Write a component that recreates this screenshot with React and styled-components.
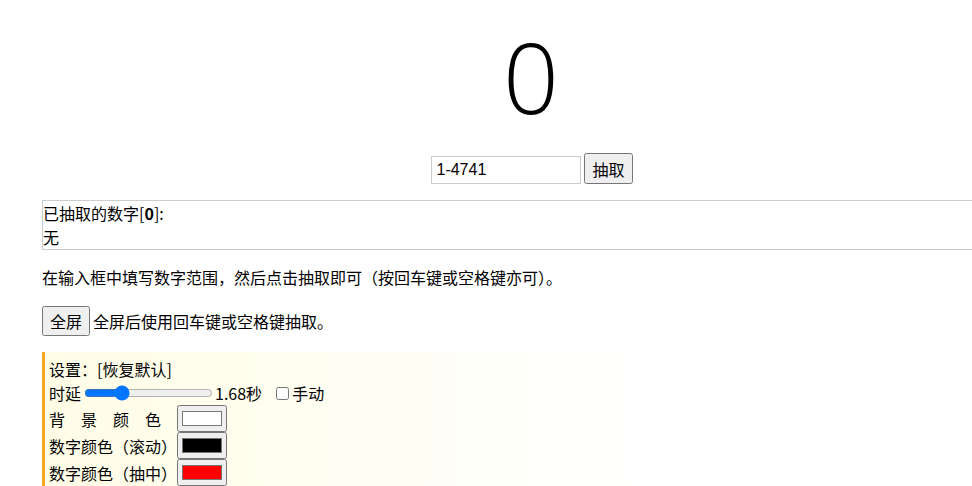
import React, { useState } from 'react';
import styled, { createGlobalStyle } from 'styled-components';

const GlobalStyle = createGlobalStyle`
  html, body {
    margin: 0;
    padding: 0;
    overflow: hidden;
    background: #fff;
  }
  body {
    font-family: "Noto Sans CJK SC", "Noto Sans", sans-serif;
    font-size: 16px;
    line-height: 24px;
    color: #000;
  }
`;

const Page = styled.div`
  width: 978px;
  padding-left: 42px;
`;

const Display = styled.div`
  font-family: "Open Sans", "Liberation Sans", sans-serif;
  font-weight: 340;
  font-size: 98px;
  line-height: 120px;
  text-align: center;
  padding-top: 16px;
`;

const DrawRow = styled.div`
  display: flex;
  justify-content: center;
  align-items: flex-end;
  gap: 3px;
  margin-top: 17px;
  padding-left: 2px;
`;

const RangeInput = styled.input`
  box-sizing: border-box;
  width: 150px;
  height: 28px;
  border: 1px solid #ccc;
  padding: 0 4px;
  font-family: "Liberation Sans", Arial, sans-serif;
  font-size: 16px;
  color: #000;
  outline: none;
`;

const Button = styled.button`
  box-sizing: border-box;
  height: ${p => (p.$h || 30)}px;
  font-family: "Noto Sans CJK SC", sans-serif;
  font-size: 16px;
  line-height: 22px;
  padding: 0 6px;
  margin: 0;
`;

const ResultBox = styled.div`
  margin-top: 16px;
  border: 1px solid #ccc;
  border-right: none;
`;

const Hint = styled.p`
  margin: 15px 0 16px;
`;

const FullRow = styled.div`
  display: flex;
  align-items: center;
  gap: 3px;
  height: 32px;
  margin-bottom: 15px;
`;

const Settings = styled.div`
  border-left: 3px solid #f5a623;
  background: linear-gradient(to right, #fffde6, #ffffff 62%);
  padding: 5px 0 0 4px;
`;

const Line = styled.div`
  display: flex;
  align-items: center;
  height: ${p => (p.$tall ? '27px' : '24px')};
`;

const Slider = styled.input`
  margin: 0 2px 0 3px;
  width: 129px;
`;

const Check = styled.input`
  margin: 0 3px 0 14px;
  width: 13px;
  height: 13px;
`;

const Label = styled.span`
  display: inline-block;
  width: 128px;
  letter-spacing: ${p => (p.$spread ? '16px' : '0')};
`;

const ColorInput = styled.input`
  margin: 0;
  width: 50px;
  height: 27px;
`;

const colors = [
  { label: '背景颜色', value: '#ffffff', spread: true },
  { label: '数字颜色（滚动）', value: '#000000' },
  { label: '数字颜色（抽中）', value: '#ff0000' },
];

export default function App() {
  const [range, setRange] = useState('1-4741');
  const [delay, setDelay] = useState(1.68);

  return (
    <Page>
      <GlobalStyle />
      <Display>0</Display>
      <DrawRow>
        <RangeInput value={range} onChange={e => setRange(e.target.value)} />
        <Button $h={31}>抽取</Button>
      </DrawRow>
      <ResultBox>
        <div>已抽取的数字[<b>0</b>]:</div>
        <div>无</div>
      </ResultBox>
      <Hint>在输入框中填写数字范围，然后点击抽取即可（按回车键或空格键亦可）。</Hint>
      <FullRow>
        <Button>全屏</Button>
        <span>全屏后使用回车键或空格键抽取。</span>
      </FullRow>
      <Settings>
        <Line>设置：[恢复默认]</Line>
        <Line>
          时延
          <Slider
            type="range"
            min="0.5"
            max="5"
            step="0.01"
            value={delay}
            onChange={e => setDelay(Number(e.target.value))}
          />
          {delay.toFixed(2)}秒
          <Check type="checkbox" />
          手动
        </Line>
        {colors.map(c => (
          <Line key={c.label} $tall>
            <Label $spread={c.spread}>{c.label}</Label>
            <ColorInput type="color" defaultValue={c.value} />
          </Line>
        ))}
      </Settings>
    </Page>
  );
}
